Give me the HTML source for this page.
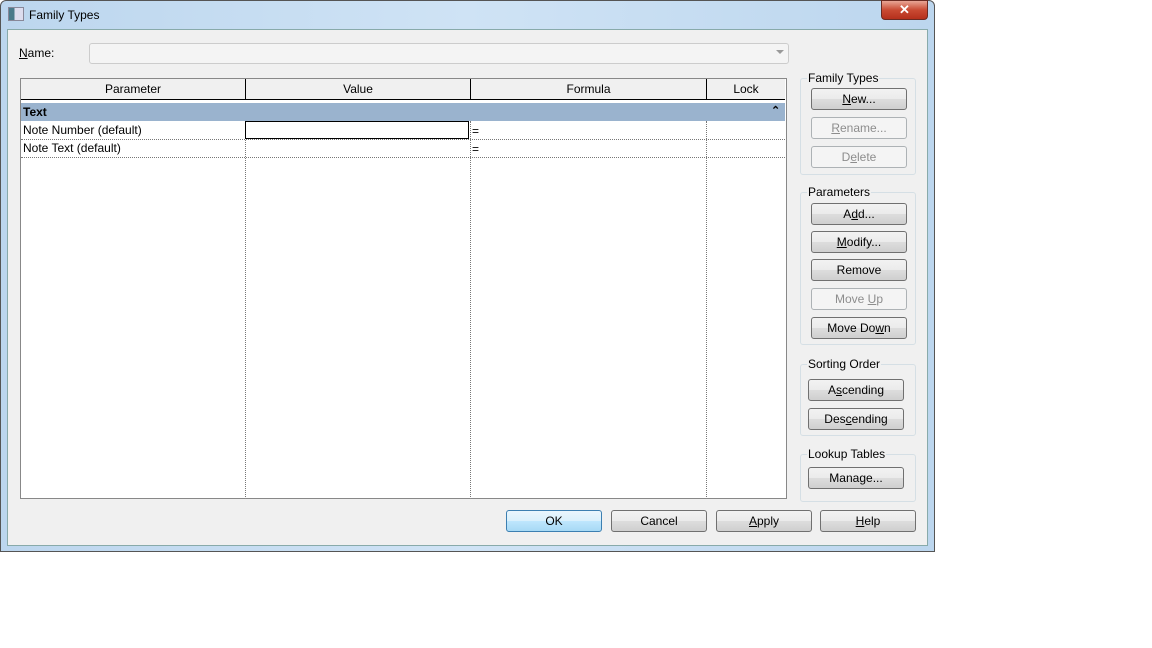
<!DOCTYPE html><html><head><style>
body{margin:0;width:1152px;height:648px;background:#fff;font-family:"Liberation Sans",sans-serif;font-size:12px;position:relative;overflow:hidden}
.a{position:absolute}
.btn{position:absolute;width:94px;height:20px;border:1px solid #707070;border-radius:3px;background:linear-gradient(#f2f2f2 0%,#ebebeb 50%,#dddddd 51%,#cfcfcf 100%);text-align:center;line-height:20px;font-size:12px;color:#000}
.dis{border-color:#adb2b5;background:#f4f4f4;color:#8d8d8d}
.grp{position:absolute;border:1px solid #d5dfe5;border-radius:3px}
.gl{position:absolute;background:#f0f0f0;padding:0 1px;top:-8px;left:6px;font-size:12px}
.vl{position:absolute;top:99px;height:398px;border-left:1px dotted #777}
.hl{position:absolute;left:21px;width:764px;border-top:1px dotted #777}
u{text-decoration:underline}
</style></head><body>
<div class="a" style="left:0;top:0;width:933px;height:550px;border:1px solid #555;border-radius:6px 6px 0 0;background:linear-gradient(90deg,#bcd6ee,#cfe3f5 50%,#bcd6ee)"></div>
<div class="a" style="left:8px;top:7px;width:14px;height:12px;background:linear-gradient(90deg,#4a7a8a 0 40%,#dde 40%);border:1px solid #889"></div>
<div class="a" style="left:29px;top:8px;font-size:12px">Family Types</div>
<div class="a" style="left:881px;top:0;width:45px;height:18px;border:1px solid #6b2a22;border-radius:0 0 4px 4px;background:linear-gradient(#e8a595,#c94a33 50%,#b5301c);color:#fff;text-align:center;font-weight:bold;line-height:18px;font-size:13px">✕</div>
<div class="a" style="left:7px;top:29px;width:919px;height:515px;border:1px solid #8aa;background:#f0f0f0"></div>
<div class="a" style="left:19px;top:46px"><u>N</u>ame:</div>
<div class="a" style="left:89px;top:43px;width:698px;height:19px;border:1px solid #ccc;border-radius:3px;background:#f4f4f4"></div>
<div class="a" style="left:776px;top:50px;width:0;height:0;border:4px solid transparent;border-top:4px solid #999"></div>
<div class="a" style="left:20px;top:78px;width:765px;height:419px;border:1px solid #888;background:#fff"></div>
<div class="a" style="left:21px;top:79px;width:764px;height:20px;background:#f0f0f0;border-bottom:1px solid #000"></div>
<div class="a" style="left:245px;top:79px;height:20px;border-left:1px solid #000"></div>
<div class="a" style="left:470px;top:79px;height:20px;border-left:1px solid #000"></div>
<div class="a" style="left:706px;top:79px;height:20px;border-left:1px solid #000"></div>
<div class="a" style="left:21px;top:82px;width:224px;text-align:center">Parameter</div>
<div class="a" style="left:246px;top:82px;width:224px;text-align:center">Value</div>
<div class="a" style="left:471px;top:82px;width:235px;text-align:center">Formula</div>
<div class="a" style="left:707px;top:82px;width:78px;text-align:center">Lock</div>
<div class="a" style="left:21px;top:103px;width:764px;height:18px;background:#9ab3ce"></div>
<div class="a" style="left:23px;top:105px;font-weight:bold">Text</div>
<div class="a" style="left:771px;top:104px;font-size:11px;font-weight:bold">⌃</div>
<div class="vl" style="left:245px;top:121px;height:376px"></div>
<div class="vl" style="left:470px;top:121px;height:376px"></div>
<div class="vl" style="left:706px;top:121px;height:376px"></div>
<div class="hl" style="top:139px"></div><div class="hl" style="top:157px"></div>
<div class="a" style="left:245px;top:121px;width:222px;height:16px;border:1px solid #000;background:#fff"></div>
<div class="a" style="left:23px;top:123px">Note Number (default)</div>
<div class="a" style="left:23px;top:141px">Note Text (default)</div>
<div class="a" style="left:472px;top:124px">=</div><div class="a" style="left:472px;top:142px">=</div>
<div class="grp" style="left:800px;top:78px;width:114px;height:95px"><span class="gl">Family Types</span></div>
<div class="btn" style="left:811px;top:88px"><u>N</u>ew...</div>
<div class="btn dis" style="left:811px;top:117px"><u>R</u>ename...</div>
<div class="btn dis" style="left:811px;top:146px">D<u>e</u>lete</div>
<div class="grp" style="left:800px;top:192px;width:114px;height:151px"><span class="gl">Parameters</span></div>
<div class="btn" style="left:811px;top:203px">A<u>d</u>d...</div>
<div class="btn" style="left:811px;top:231px"><u>M</u>odify...</div>
<div class="btn" style="left:811px;top:259px">Remove</div>
<div class="btn dis" style="left:811px;top:288px">Move <u>U</u>p</div>
<div class="btn" style="left:811px;top:317px">Move Do<u>w</u>n</div>
<div class="grp" style="left:800px;top:364px;width:114px;height:70px"><span class="gl">Sorting Order</span></div>
<div class="btn" style="left:808px;top:379px">A<u>s</u>cending</div>
<div class="btn" style="left:808px;top:408px">Des<u>c</u>ending</div>
<div class="grp" style="left:800px;top:454px;width:114px;height:46px"><span class="gl">Lookup Tables</span></div>
<div class="btn" style="left:808px;top:467px">Mana<u>g</u>e...</div>
<div class="btn" style="left:506px;top:510px;border-color:#3c7fb1;background:linear-gradient(#eaf6fd,#d9f0fc 50%,#bee6fd 51%,#a7d9f5)">OK</div>
<div class="btn" style="left:611px;top:510px">Cancel</div>
<div class="btn" style="left:716px;top:510px"><u>A</u>pply</div>
<div class="btn" style="left:820px;top:510px"><u>H</u>elp</div>
</body></html>
